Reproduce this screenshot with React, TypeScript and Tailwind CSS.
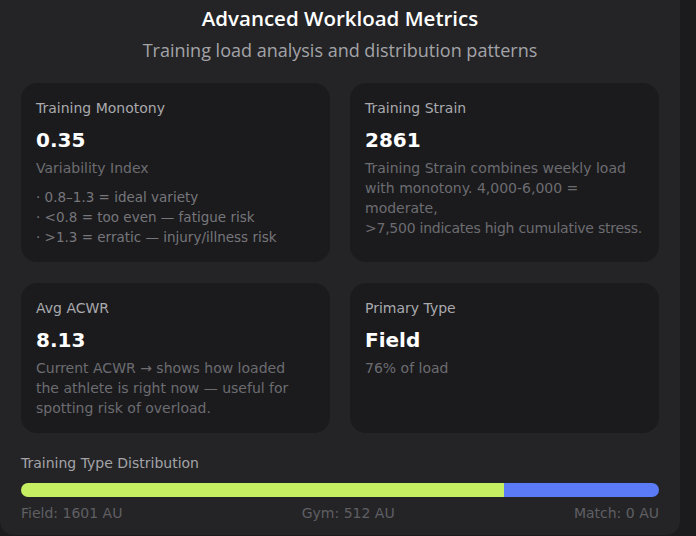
import React from "react";

const BODY = "font-['DejaVu_Sans',sans-serif]";

type Metric = {
  label: string;
  value: string;
  lines?: string[];
  sub?: string;
  bullets?: string[];
};

const METRICS: Metric[] = [
  {
    label: "Training Monotony",
    value: "0.35",
    sub: "Variability Index",
    bullets: [
      "· 0.8–1.3 = ideal variety",
      "· <0.8 = too even — fatigue risk",
      "· >1.3 = erratic — injury/illness risk",
    ],
  },
  {
    label: "Training Strain",
    value: "2861",
    lines: [
      "Training Strain combines weekly load with monotony. 4,000-6,000 = moderate,",
      ">7,500 indicates high cumulative stress.",
    ],
  },
  {
    label: "Avg ACWR",
    value: "8.13",
    lines: [
      "Current ACWR → shows how loaded",
      "the athlete is right now — useful for",
      "spotting risk of overload.",
    ],
  },
  {
    label: "Primary Type",
    value: "Field",
    sub: "76% of load",
  },
];

const DIST = [
  { name: "Field", au: 1601, color: "bg-[#c6f062]" },
  { name: "Gym", au: 512, color: "bg-[#5b7bf6]" },
  { name: "Match", au: 0, color: "bg-[#f0a040]" },
];

function MetricCard({ m }: { m: Metric }) {
  return (
    <div className="rounded-[16px] bg-[#1b1b1d] p-[15px]">
      <div className="text-[14px] leading-[20px] text-[#a9a9ae]">{m.label}</div>
      <div className="mt-[8px] text-[20px] leading-[28px] font-bold text-white">{m.value}</div>
      {m.sub && (
        <div className="mt-[4px] text-[14px] leading-[20px] text-[#6c6c71]">{m.sub}</div>
      )}
      {m.lines && (
        <div className="mt-[4px] text-[14px] leading-[20px] text-[#6c6c71]">
          {m.lines.map((l, i) => (
            <div key={i} className={l.startsWith(">") ? "whitespace-nowrap tracking-[-0.25px]" : ""}>
              {l}
            </div>
          ))}
        </div>
      )}
      {m.bullets && (
        <div className="mt-[9px] text-[13.5px] leading-[20px] text-[#76767b]">
          {m.bullets.map((b) => (
            <div key={b}>{b}</div>
          ))}
        </div>
      )}
    </div>
  );
}

export default function App() {
  const total = DIST.reduce((s, d) => s + d.au, 0);

  return (
    <div className="min-h-[536px] w-[696px] bg-[#1b1b1d]">
      <div className={`w-[680px] rounded-b-[14px] bg-[#242426] px-[21px] pt-[4px] pb-[12px] ${BODY}`}>
        {/* Header */}
        <div className="text-center font-['Open_Sans',sans-serif]">
          <div className="text-[20.5px] leading-[28px] font-semibold text-white">
            Advanced Workload Metrics
          </div>
          <div className="mt-[5px] text-[18px] leading-[26px] text-[#a3a3a8]">
            Training load analysis and distribution patterns
          </div>
        </div>

        {/* Metric cards */}
        <div className="mt-[20px] grid grid-cols-2 gap-x-[20px] gap-y-[21px]">
          {METRICS.map((m) => (
            <MetricCard key={m.label} m={m} />
          ))}
        </div>

        {/* Distribution */}
        <div className="mt-[20px] text-[14px] leading-[20px] text-[#a3a3a8]">
          Training Type Distribution
        </div>
        <div className="mt-[10px] flex h-[14px] overflow-hidden rounded-full">
          {DIST.map((d) =>
            d.au > 0 ? (
              <div key={d.name} className={d.color} style={{ width: `${(d.au / total) * 100}%` }} />
            ) : null
          )}
        </div>
        <div className="mt-[6px] flex justify-between text-[14px] leading-[20px] text-[#5f5f64]">
          {DIST.map((d) => (
            <span key={d.name}>
              {d.name}: {d.au} AU
            </span>
          ))}
        </div>
      </div>
    </div>
  );
}
